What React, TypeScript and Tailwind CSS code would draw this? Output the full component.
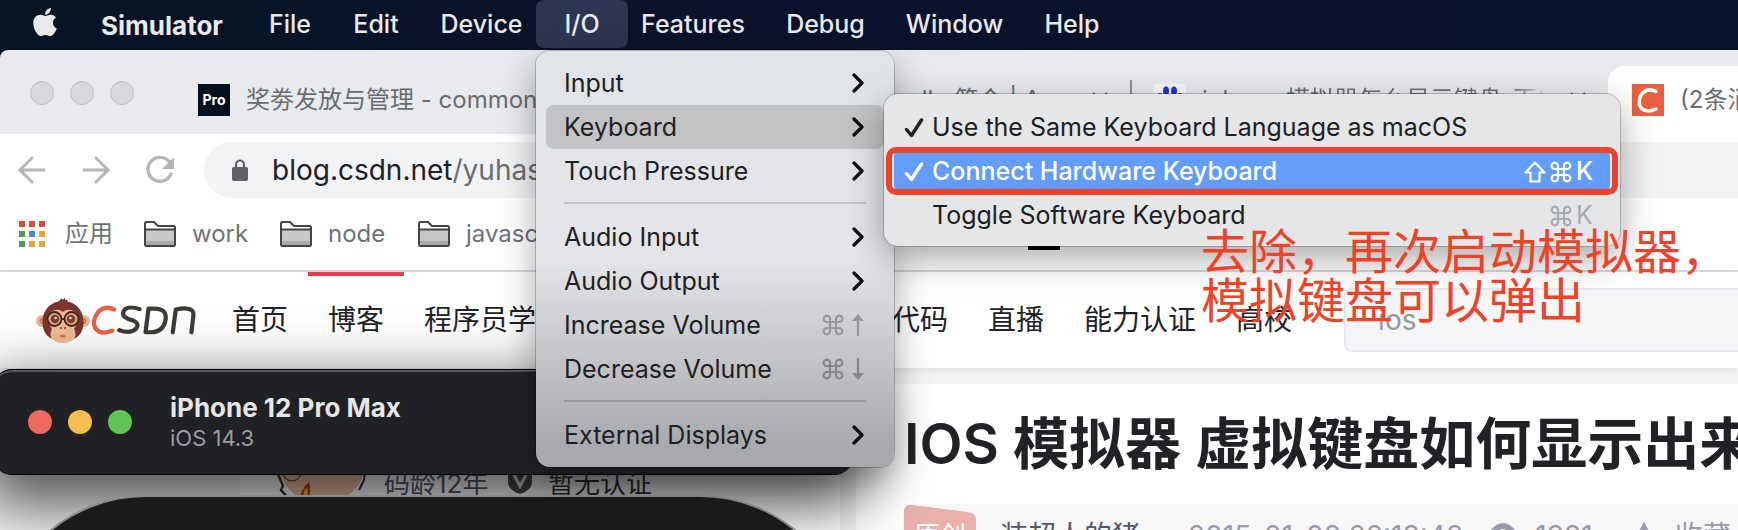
import React from "react";
import { FaApple } from "react-icons/fa";

const UI = "font-[Inter,'Noto_Sans_CJK_SC',sans-serif]";

function Dot({ color }: { color: string }) {
  return <span className={`block size-6 rounded-full ${color}`} />;
}

function Folder() {
  return (
    <svg className="w-8 shrink-0" viewBox="0 0 32 26" fill="none">
      <path d="M1 2.5Q1 1 2.500 1H10l4 4h15.500Q31 5 31 6.500V23.500Q31 25 29.500 25H2.500Q1 25 1 23.500Z" fill="#fff" />
      <path d="M1 9H31V24.500H1Z" fill="#c8c8c8" />
      <path d="M2 20H30V24H2Z" fill="#aaa" />
      <path d="M1 2.5Q1 1 2.500 1H10l4 4h15.500Q31 5 31 6.500V23.500Q31 25 29.500 25H2.500Q1 25 1 23.500ZM1 8.500H31" stroke="#444" strokeWidth="2" />
    </svg>
  );
}

function Chevron() {
  return (
    <svg className="w-3" viewBox="0 0 12 20" fill="none" stroke="#0c0c0d" strokeWidth="3.200" strokeLinecap="round" strokeLinejoin="round">
      <path d="M2 2l8 8-8 8" />
    </svg>
  );
}

function Check() {
  return (
    <svg className="w-5" viewBox="0 0 20 20" fill="none" stroke="currentColor" strokeWidth="3.400" strokeLinecap="round" strokeLinejoin="round">
      <path d="M2.500 11.500L7.500 17.500 17.500 2" />
    </svg>
  );
}

function Command() {
  return (
    <svg className="w-[22px]" viewBox="0 0 22 22" fill="none" stroke="currentColor" strokeWidth="2.200">
      <path d="M8 8V5a3.200 3.200 0 1 0-3.200 3H17.200A3.200 3.200 0 1 0 14 5V17a3.200 3.200 0 1 0 3.200-3H4.800A3.200 3.200 0 1 0 8 17Z" />
    </svg>
  );
}

function Shift() {
  return (
    <svg className="w-[22px]" viewBox="0 0 22 22" fill="none" stroke="currentColor" strokeWidth="2.200" strokeLinejoin="round">
      <path d="M11 1.500L20.500 11.500H15.500V20.500H6.500V11.500H1.500Z" />
    </svg>
  );
}

function Arrow({ down }: { down?: boolean }) {
  return (
    <svg className="w-3" viewBox="0 0 12 22">
      <path
        d={down ? "M4.800 0H7.200V15H12L6 22 0 15H4.800Z" : "M4.800 22H7.200V7H12L6 0 0 7H4.800Z"}
        fill="currentColor"
      />
    </svg>
  );
}

function Monkey() {
  return (
    <svg className="w-[54px] shrink-0" viewBox="0 0 54 46">
      <circle cx="6" cy="24" r="6" fill="#e9b894" />
      <circle cx="48" cy="24" r="6" fill="#e9b894" />
      <circle cx="7" cy="24" r="3.500" fill="#d98078" />
      <circle cx="47" cy="24" r="3.500" fill="#d98078" />
      <path d="M27 4C37 4 47.500 11 47.500 25 47.500 36 42 43 27 45 12 43 6.500 36 6.500 25 6.500 11 17 4 27 4Z" fill="#7a362c" />
      <path d="M22 5L26 1 26.500 3 29 .5 29 3 31 2.500 32 6Z" fill="#7a362c" />
      <path d="M27 15C33 10 42 14 42 22 42 26 39 30 38 32 43 41 35 46 27 46 19 46 11 41 16 32 15 30 12 26 12 22 12 14 21 10 27 15Z" fill="#edbc94" />
      <g stroke="#43251e" strokeWidth="1.800" fill="#dfa988">
        <circle cx="18.500" cy="22" r="7" />
        <circle cx="35.500" cy="22" r="7" />
        <path d="M25.500 22H28.500" />
      </g>
      <circle cx="19" cy="22" r="4.200" fill="#7a3f30" />
      <circle cx="35" cy="22" r="4.200" fill="#7a3f30" />
      <circle cx="19.500" cy="21" r="1.300" fill="#f2d3bd" />
      <circle cx="34.500" cy="21" r="1.300" fill="#f2d3bd" />
      <circle cx="25" cy="31" r="1" fill="#7a362c" />
      <circle cx="29" cy="31" r="1" fill="#7a362c" />
      <ellipse cx="27" cy="39" rx="3" ry="1.500" fill="#e0706c" />
    </svg>
  );
}

function CsdnMark() {
  return (
    <svg className="ml-0.5 w-[104px] shrink-0" viewBox="1 0 103 30" fill="none" strokeWidth="4.200" strokeLinecap="round" strokeLinejoin="round">
      <path d="M23 4.500Q14 0 7 7 0 17 5 24 10 30 21 25.500" stroke="#ec6140" />
      <g stroke="#3d3d38">
        <path d="M48 4Q38 1 34 4 30 8 33 11.500 36 14 42 15.500 48 18 45 23 40 29 28 25" />
        <path d="M57 3.500H62Q75 3 74 14 72 27 59 27H54Z" />
        <path d="M81 27L84 4.500Q91 3 95 3.500 102 4 101.500 10L99.500 27" />
      </g>
    </svg>
  );
}

const menus = ["File", "Edit", "Device", "I/O", "Features", "Debug", "Window", "Help"];
const menuWidth: Record<string, string> = {
  File: "w-[70px]",
  Edit: "w-[102px]",
  Device: "w-[109px]",
  "I/O": "w-[92px] rounded-lg bg-[#2c3650]",
  Features: "w-[130px]",
  Debug: "w-[135px]",
  Window: "w-[123px]",
  Help: "w-[112px]",
};

function MenuBar() {
  return (
    <header className="flex h-[50px] shrink-0 items-start bg-linear-to-r from-[#061423] via-[#0a122c] to-[#06132a] text-[25px] font-medium text-[#e8e9ec]">
      <button aria-label="Apple" className="ml-[29px] flex h-11 items-center"><FaApple className="size-8" /></button>
      <button className="ml-2 flex h-12 w-[186px] items-center justify-center pt-0.5 text-[26px] font-bold">Simulator</button>
      {menus.map((m) => (
        <button key={m} className={`flex h-12 shrink-0 items-center justify-center pt-0.5 ${menuWidth[m]}`}>{m}</button>
      ))}
    </header>
  );
}

function Tabs() {
  return (
    <div className="flex h-[84px] shrink-0 overflow-hidden rounded-tl-lg bg-[#e8eaed] text-2xl text-[#6a6c70]">
      <div className="flex w-[198px] shrink-0 gap-4 pt-[31px] pl-[30px]">
        {[0, 1, 2].map((i) => <Dot key={i} color="border border-[#bebfc1] bg-[#d8d9db]" />)}
      </div>
      <div className="flex w-[678px] shrink-0 items-center gap-4 pt-4">
        <span className="flex size-8 items-center justify-center bg-[#04101d] text-sm font-bold text-white">Pro</span>
        <span>奖劵发放与管理 - common</span>
      </div>
      <div className="flex w-64 shrink-0 items-center pt-4 whitespace-nowrap">
        <span className="w-[216px]">Apollo 简介 | A</span>
        <Close />
        <span className="ml-auto h-10 w-0.5 bg-[#8d8f92]" />
      </div>
      <div className="flex w-[476px] shrink-0 items-center pt-4 pl-[22px] whitespace-nowrap">
        <Baidu />
        <span className="ml-4 w-[344px] overflow-hidden bg-linear-to-r from-[#6a6c70] from-90% to-transparent bg-clip-text text-transparent">iphone 模拟器怎么显示键盘_百度</span>
        <span className="ml-6"><Close /></span>
      </div>
      <div className="mt-4 flex min-w-0 flex-1 items-center gap-4 rounded-tl-2xl bg-white pl-6 whitespace-nowrap">
        <span className="flex size-8 shrink-0 items-center justify-center bg-[#e8603f]">
          <svg className="w-6" viewBox="0 0 24 26" fill="none" stroke="#fff" strokeWidth="3.500" strokeLinecap="round"><path d="M20 4.500Q11 0 5 8 1 17 6 22 12 26 20 22" /></svg>
        </span>
        <span>(2条消息)</span>
      </div>
    </div>
  );
}

function Close() {
  return (
    <svg className="w-4" viewBox="0 0 16 16" stroke="#66686c" strokeWidth="2"><path d="M1 1L15 15M15 1L1 15" /></svg>
  );
}

function Baidu() {
  return (
    <svg className="w-8 shrink-0" viewBox="0 0 32 32" fill="#2733d3">
      <rect width="32" height="32" rx="3" fill="#f8f8fa" />
      <ellipse cx="12" cy="7" rx="3" ry="4.500" />
      <ellipse cx="20" cy="7" rx="3" ry="4.500" />
      <ellipse cx="6" cy="13" rx="3" ry="4" />
      <ellipse cx="26" cy="13" rx="3" ry="4" />
      <path d="M16 14L25 24Q24 30 16 28 8 30 7 24Z" />
    </svg>
  );
}

function Toolbar() {
  return (
    <div className="flex h-[72px] shrink-0 items-center bg-white">
      <div className="flex w-[204px] shrink-0 gap-8 pl-4 text-[#b4b6b9]">
        <button aria-label="Back"><svg className="w-8" viewBox="0 0 32 32" fill="none" stroke="currentColor" strokeWidth="3" strokeLinecap="round"><path d="M28 16H4M16 4L4 16 16 28" /></svg></button>
        <button aria-label="Forward"><svg className="w-8" viewBox="0 0 32 32" fill="none" stroke="currentColor" strokeWidth="3" strokeLinecap="round"><path d="M4 16H28M16 4L28 16 16 28" /></svg></button>
        <button aria-label="Reload"><svg className="w-8" viewBox="0 0 32 32" fill="none" stroke="currentColor" strokeWidth="3.200" strokeLinecap="round"><path d="M25.500 8A12 12 0 1 0 27 20" /><path d="M30 3V15H18Z" fill="currentColor" stroke="none" /></svg></button>
      </div>
      <div className="flex h-14 flex-1 items-center rounded-l-full bg-[#f1f3f4] pl-7 text-[28px]">
        <svg className="mr-6 w-4" viewBox="0 0 16 22"><path d="M4 9V5.500a4 4 0 0 1 8 0V9" fill="none" stroke="#5f6164" strokeWidth="2.200" /><rect y="8" width="16" height="14" rx="2" fill="#5f6164" /></svg>
        <span className="text-[#202124]">blog.csdn.net</span><span className="text-[#6b6d71]">/yuhas</span>
      </div>
    </div>
  );
}

const appColors = ["fill-[#e04a3f]", "fill-[#e04a3f]", "fill-[#e04a3f]", "fill-[#4f9a5c]", "fill-[#4285f4]", "fill-[#e8a33a]", "fill-[#4f9a5c]", "fill-[#e8a33a]", "fill-[#e8a33a]"];

function Bookmarks() {
  return (
    <div className="flex h-[66px] shrink-0 items-center border-b-2 border-[#dadce0] bg-white pb-2 pl-[19px] text-2xl text-[#6f7276]">
      <svg className="w-[26px]" viewBox="0 0 26 26">
        {appColors.map((c, i) => <rect key={i} className={c} x={(i % 3) * 10} y={Math.floor(i / 3) * 10} width="6" height="6" />)}
      </svg>
      <a href="#apps" className="ml-5 w-[79px]">应用</a>
      <Folder /><a href="#work" className="ml-4 w-[88px]">work</a>
      <Folder /><a href="#node" className="ml-4 w-[90px]">node</a>
      <Folder /><a href="#js" className="ml-4">javasc</a>
    </div>
  );
}

function SiteNav() {
  return (
    <nav className="relative z-1 flex h-24 shrink-0 items-center bg-white pl-9 text-[28px] text-[#222226] whitespace-nowrap shadow-[0_2px_8px_rgba(0,0,0,0.08)]">
      <a href="#home" aria-label="CSDN" className="flex w-40 shrink-0 items-center"><Monkey /><CsdnMark /></a>
      <div className="ml-9 flex h-full gap-10">
        <a href="#index" className="flex items-center">首页</a>
        <a href="#blog" className="relative flex items-center">
          博客
          <span className="absolute -inset-x-5 top-0 h-1 bg-[#e83b4b]" />
        </a>
        <a href="#college" className="flex w-[428px] items-center">程序员学</a>
        <a href="#code" className="flex items-center">代码</a>
        <a href="#live" className="flex items-center">直播</a>
        <a href="#cert" className="flex items-center">能力认证</a>
        <a href="#univ" className="flex items-center">高校</a>
      </div>
      <input aria-label="搜索" placeholder="ios" className="ml-[52px] h-16 min-w-0 flex-1 rounded-l-lg border-2 border-r-0 border-[#e8e8ed] bg-[#f5f6f7] px-8 placeholder:text-[#999]" />
    </nav>
  );
}

function Article() {
  return (
    <main className="flex flex-1 gap-4 bg-[#f3f4f6] pt-4 pl-60">
      <aside className="flex w-[600px] shrink-0 items-start bg-white pt-[72px] pl-9 text-[26px] text-[#555666]">
        <svg className="w-[92px]" viewBox="0 0 92 50">
          <circle cx="46" cy="4" r="44" fill="#edc0a6" />
          <path d="M2 18L7 30 5 34 14 44" fill="none" stroke="#43302a" strokeWidth="2.500" />
          <circle cx="16" cy="16" r="9" fill="none" stroke="#6b5146" strokeWidth="1.200" />
          <path d="M24 44Q24 34 33 26 36 34 32 44Z" fill="#c3341f" />
          <path d="M28 42Q26 36 31 31 33 38 30 42Z" fill="#f5b63e" />
          <path d="M89 16L88 24 83 34" fill="none" stroke="#43302a" strokeWidth="2" />
        </svg>
        <span className="mt-2 ml-4 w-[124px]">码龄12年</span>
        <svg className="mt-3 mr-4 w-6" viewBox="0 0 24 26"><path d="M12 0L24 4V14Q24 22 12 26 0 22 0 14V4Z" fill="#4b4b4f" /><path d="M6 7L12 18 18 7" fill="none" stroke="#ddd" strokeWidth="3" /></svg>
        <span className="mt-2 text-[#333338]">暂无认证</span>
      </aside>
      <article className="min-w-0 flex-1 overflow-hidden bg-white pt-6 pl-12 whitespace-nowrap">
        <h1 className="h-24 text-[56px] leading-[72px] font-semibold text-[#222226]">IOS 模拟器 虚拟键盘如何显示出来</h1>
        <div className="flex h-14 items-start bg-[#f7f7f8] text-[28px] leading-10 text-[#999aaa]">
          <div className="relative h-14 w-[72px] shrink-0">
            <svg className="w-[72px]" viewBox="0 0 72 56"><path d="M0 8Q0 0 8 1L64 8Q72 9 72 16V56H0Z" fill="#e8b1ab" /></svg>
            <span className="absolute inset-x-0 top-3 text-center text-[26px] text-white">原创</span>
          </div>
          <span className="mt-3 ml-6 text-[#555666]">装超人的猪</span>
          <span className="mt-3 ml-12">2015-01-08 22:18:48</span>
          <svg className="mt-[18px] ml-6 w-8" viewBox="0 0 32 24"><path d="M1 12Q8 1 16 1T31 12Q24 23 16 23T1 12Z" fill="#999aaa" /><circle cx="16" cy="13" r="6" fill="#f7f7f8" /></svg>
          <span className="mt-3 ml-4">1981</span>
          <svg className="mt-[18px] ml-9 w-[30px]" viewBox="0 0 30 28"><path d="M15 0L20 9 30 11 23 18 24 28 15 24 6 28 7 18 0 11 10 9Z" fill="#999aaa" /></svg>
          <span className="mt-3 ml-4">收藏</span>
        </div>
      </article>
    </main>
  );
}

function Simulator() {
  return (
    <section className="absolute top-[369px] -left-2 z-10 w-[862px]">
      <div className="relative z-2 flex h-[106px] items-center rounded-[20px] border border-black bg-[#202124] pl-[35px] shadow-[inset_0_2px_0_#55575a,0_22px_60px_10px_rgba(0,0,0,0.65)]">
        <div className="flex gap-4">
          <Dot color="bg-[#ed6a5f]" />
          <Dot color="bg-[#f5bd4f]" />
          <Dot color="bg-[#61c454]" />
        </div>
        <div className="ml-[38px]">
          <h2 className="text-[26px] leading-8 font-bold text-[#e6e6e7]">iPhone 12 Pro Max</h2>
          <p className="text-[22px] leading-7 text-[#9b9c9f]">iOS 14.3</p>
        </div>
      </div>
      <div className="relative z-3 mx-1 mt-5 h-80 rounded-[150px] border-2 border-[#8a8a8a] bg-[#1a1a1a]" />
    </section>
  );
}

function Row({ label, active, children }: { label: string; active?: boolean; children: React.ReactNode }) {
  return (
    <button className={`flex h-11 w-full items-center justify-between rounded-lg pr-5 pl-[18px] ${active ? "bg-[#c2c3c5]" : ""}`}>
      <span className="pt-0.5">{label}</span>
      {children}
    </button>
  );
}

function Rule() {
  return <div className="mx-[18px] mt-[9px] mb-[11px] h-0.5 bg-black/15" />;
}

function IoMenu() {
  return (
    <div className="absolute top-[51px] left-[536px] z-20 w-[358px] rounded-[14px] bg-linear-to-b from-[#e1e4e7] via-[#e4e5e8] via-50% to-[#a8a9ad] to-95% p-2.5 text-[25px] text-[#1f2021] shadow-[0_0_0_1px_rgba(0,0,0,0.2),0_12px_36px_rgba(0,0,0,0.35)]">
      <Row label="Input"><Chevron /></Row>
      <Row label="Keyboard" active><Chevron /></Row>
      <Row label="Touch Pressure"><Chevron /></Row>
      <Rule />
      <Row label="Audio Input"><Chevron /></Row>
      <Row label="Audio Output"><Chevron /></Row>
      <Row label="Increase Volume"><span className="flex gap-2 text-[#97989c]"><Command /><Arrow /></span></Row>
      <Row label="Decrease Volume"><span className="flex gap-2 text-[#87888c]"><Command /><Arrow down /></span></Row>
      <Rule />
      <Row label="External Displays"><Chevron /></Row>
    </div>
  );
}

function KeyboardMenu() {
  return (
    <div className="absolute top-[94px] left-[884px] z-30 w-[736px] rounded-[14px] bg-[#e4e6e8] px-2.5 pt-[11px] pb-[9px] text-[25px] text-[#1f2021] shadow-[0_0_0_1px_rgba(0,0,0,0.2),0_12px_36px_rgba(0,0,0,0.35)]">
      <button className="flex h-11 w-full items-center px-2.5 pt-0.5">
        <Check /><span className="ml-2">Use the Same Keyboard Language as macOS</span>
      </button>
      <button className="relative flex h-11 w-full items-center rounded-lg bg-[#629df9] px-2.5 pt-0.5 font-medium text-white">
        <Check /><span className="ml-2">Connect Hardware Keyboard</span>
        <span className="ml-auto flex items-center gap-1 pr-2"><Shift /><Command /><span className="w-4">K</span></span>
        <span className="absolute -inset-x-2 -inset-y-0.5 rounded-[10px] border-6 border-[#ee4328]" />
      </button>
      <button className="flex h-11 w-full items-center pt-0.5 pr-2.5 pl-[38px]">
        Toggle Software Keyboard
        <span className="ml-auto flex items-center gap-1 pr-2 text-[#a9abad]"><Command /><span className="w-4">K</span></span>
      </button>
    </div>
  );
}

export default function App() {
  return (
    <div className={`relative flex h-screen flex-col overflow-hidden bg-[#06132a] ${UI}`}>
      <MenuBar />
      <Tabs />
      <Toolbar />
      <Bookmarks />
      <SiteNav />
      <Article />
      <span className="absolute top-[246px] left-[1028px] z-40 h-1 w-8 bg-black" />
      <Simulator />
      <IoMenu />
      <KeyboardMenu />
      <p className="absolute top-[224px] left-[1201px] z-50 font-['Noto_Sans_CJK_SC',sans-serif] text-5xl leading-[49px] whitespace-nowrap text-[#ee4328]">
        去除，再次启动模拟器，<br />模拟键盘可以弹出
      </p>
    </div>
  );
}
